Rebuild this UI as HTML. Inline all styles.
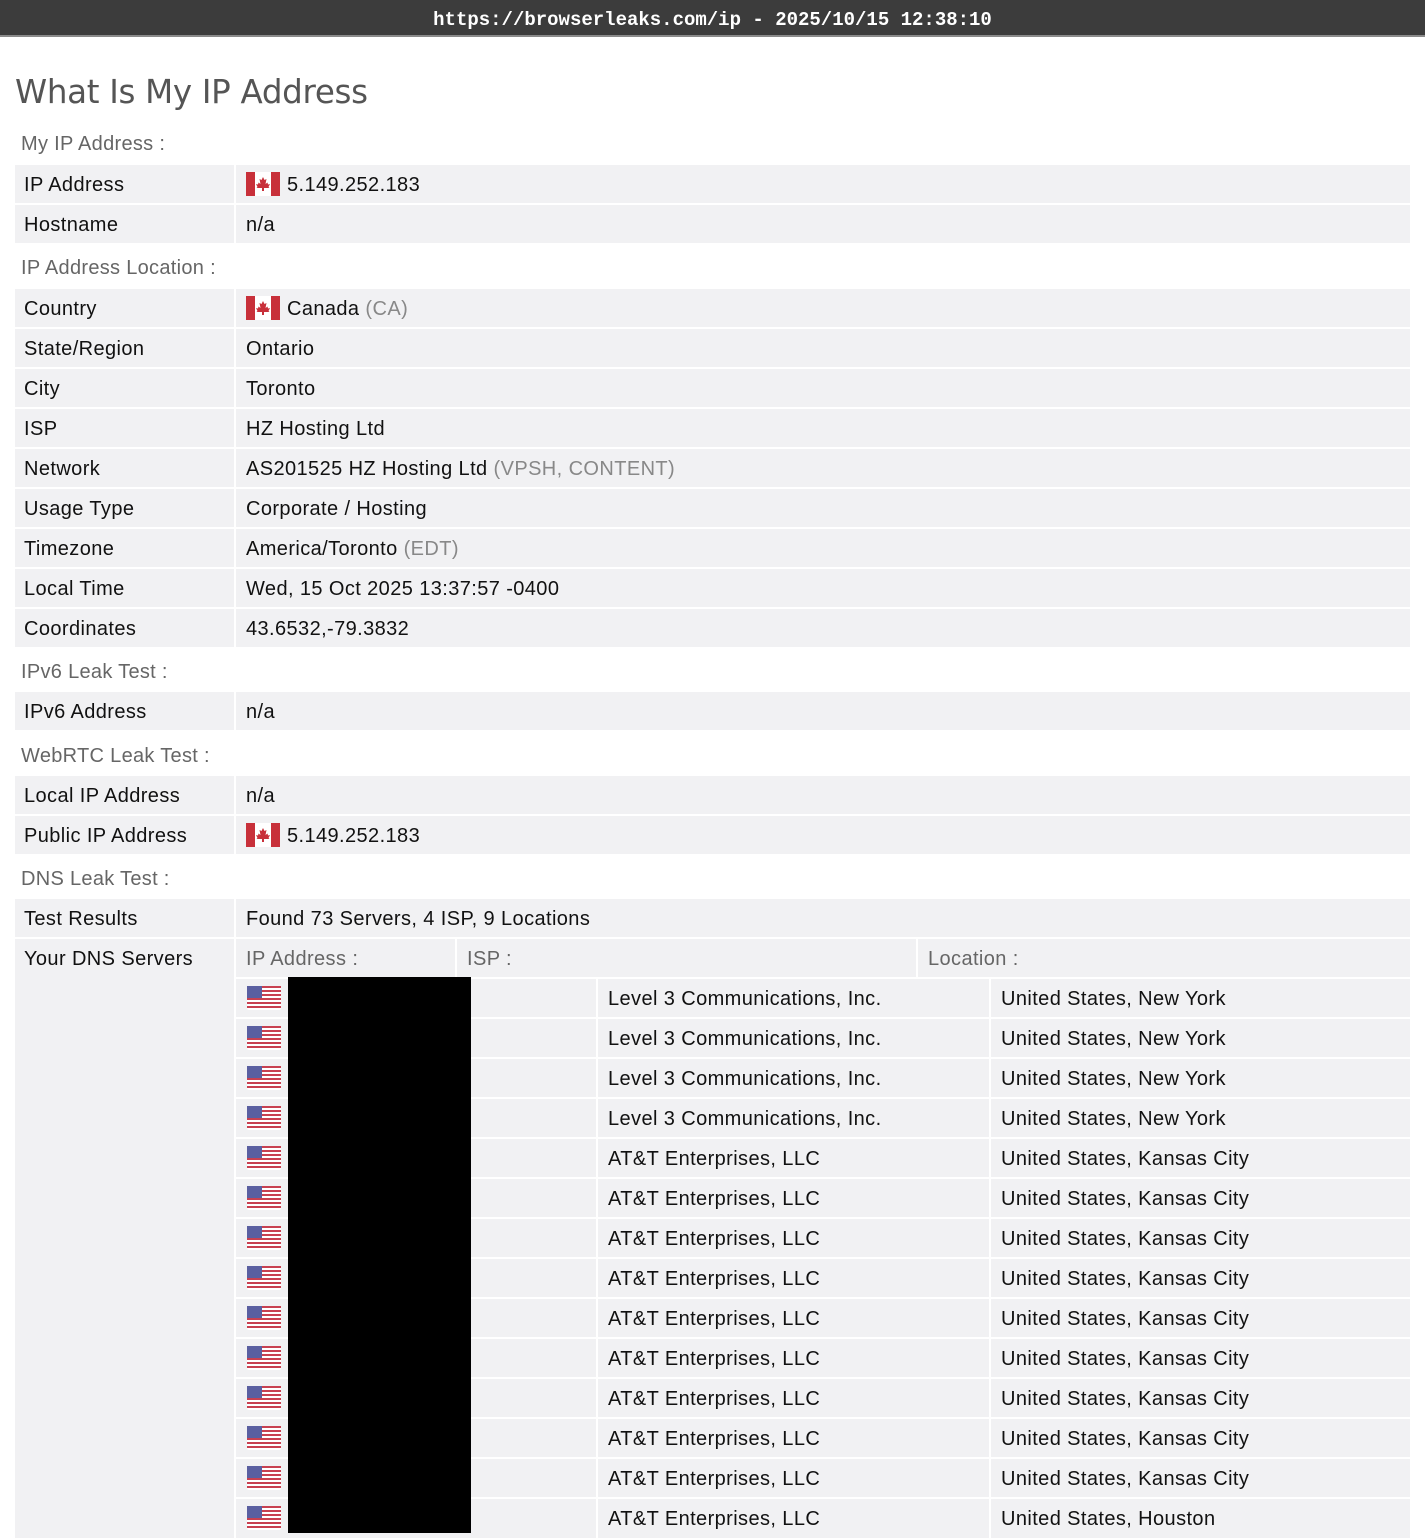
<!DOCTYPE html>
<html><head><meta charset="utf-8"><style>
*{margin:0;padding:0;box-sizing:border-box}
body{width:1425px;height:1538px;overflow:hidden;background:#fff;font-family:"Liberation Sans",Arial,sans-serif;position:relative;color:#111;letter-spacing:0.4px}
.top{position:absolute;left:0;top:0;width:1425px;height:37px;background:#3c3c3c;border-bottom:2px solid #8a8a8a;color:#fff;font-family:"Liberation Mono","DejaVu Sans Mono",monospace;font-weight:bold;font-size:19px;text-align:center;line-height:41px;letter-spacing:0}
h1{position:absolute;left:15px;top:73px;font-family:"DejaVu Sans","Liberation Sans",sans-serif;font-weight:normal;font-size:32.5px;color:#555;letter-spacing:-0.3px}
.sec{position:absolute;left:21px;font-size:20px;color:#666;line-height:26px;letter-spacing:0.3px}
.row{position:absolute;left:15px;width:1395px;height:38px;background:#f1f1f3;font-size:20px;line-height:40px}
.row .l{position:absolute;left:9px;top:0}
.row .v{position:absolute;left:231px;top:0}
.row:before{content:"";position:absolute;left:219px;top:0;width:2px;height:38px;background:#fff}
.g{color:#888}
.fl{display:inline-block;vertical-align:middle;margin-right:7px;position:relative;top:-2px}
.big{position:absolute;left:15px;top:939px;width:1395px;height:599px;background:#f1f1f3}
.big:before{content:"";position:absolute;left:219px;top:0;width:2px;height:599px;background:#fff}
.hd{position:absolute;top:939px;height:38px;font-size:20px;line-height:40px;color:#666;padding-left:10px}
.vl{position:absolute;width:2px;background:#fff}
.hl{position:absolute;left:236px;width:1174px;height:2px;background:#fff}
.d{position:absolute;font-size:20px;line-height:40px}
</style></head><body>
<div class="top">https://browserleaks.com/ip - 2025/10/15 12:38:10</div>
<h1>What Is My IP Address</h1>

<div class="sec" style="top:131px">My IP Address :</div>
<div class="row" style="top:165px"><span class="l">IP Address</span><span class="v"><svg class="fl" width="34" height="24" viewBox="0 0 34 24"><rect width="34" height="24" rx="2" fill="#fff"/><rect width="9" height="24" fill="#c8303a"/><rect x="25" width="9" height="24" fill="#c8303a"/><path d="M17 5l1.5 3 2-1-1 5 2-1.5.5 2 2-.5-1.5 3 1 1H18v3h-2v-3h-5.5l1-1-1.5-3 2 .5.5-2 2 1.5-1-5 2 1z" fill="#c8303a"/></svg>5.149.252.183</span></div>
<div class="row" style="top:205px"><span class="l">Hostname</span><span class="v">n/a</span></div>

<div class="sec" style="top:255px">IP Address Location :</div>
<div class="row" style="top:289px"><span class="l">Country</span><span class="v"><svg class="fl" width="34" height="24" viewBox="0 0 34 24"><rect width="34" height="24" rx="2" fill="#fff"/><rect width="9" height="24" fill="#c8303a"/><rect x="25" width="9" height="24" fill="#c8303a"/><path d="M17 5l1.5 3 2-1-1 5 2-1.5.5 2 2-.5-1.5 3 1 1H18v3h-2v-3h-5.5l1-1-1.5-3 2 .5.5-2 2 1.5-1-5 2 1z" fill="#c8303a"/></svg>Canada <span class="g">(CA)</span></span></div>
<div class="row" style="top:329px"><span class="l">State/Region</span><span class="v">Ontario</span></div>
<div class="row" style="top:369px"><span class="l">City</span><span class="v">Toronto</span></div>
<div class="row" style="top:409px"><span class="l">ISP</span><span class="v">HZ Hosting Ltd</span></div>
<div class="row" style="top:449px"><span class="l">Network</span><span class="v">AS201525 HZ Hosting Ltd <span class="g">(VPSH, CONTENT)</span></span></div>
<div class="row" style="top:489px"><span class="l">Usage Type</span><span class="v">Corporate / Hosting</span></div>
<div class="row" style="top:529px"><span class="l">Timezone</span><span class="v">America/Toronto <span class="g">(EDT)</span></span></div>
<div class="row" style="top:569px"><span class="l">Local Time</span><span class="v">Wed, 15 Oct 2025 13:37:57 -0400</span></div>
<div class="row" style="top:609px"><span class="l">Coordinates</span><span class="v">43.6532,-79.3832</span></div>

<div class="sec" style="top:659px">IPv6 Leak Test :</div>
<div class="row" style="top:692px"><span class="l">IPv6 Address</span><span class="v">n/a</span></div>

<div class="sec" style="top:743px">WebRTC Leak Test :</div>
<div class="row" style="top:776px"><span class="l">Local IP Address</span><span class="v">n/a</span></div>
<div class="row" style="top:816px"><span class="l">Public IP Address</span><span class="v"><svg class="fl" width="34" height="24" viewBox="0 0 34 24"><rect width="34" height="24" rx="2" fill="#fff"/><rect width="9" height="24" fill="#c8303a"/><rect x="25" width="9" height="24" fill="#c8303a"/><path d="M17 5l1.5 3 2-1-1 5 2-1.5.5 2 2-.5-1.5 3 1 1H18v3h-2v-3h-5.5l1-1-1.5-3 2 .5.5-2 2 1.5-1-5 2 1z" fill="#c8303a"/></svg>5.149.252.183</span></div>

<div class="sec" style="top:866px">DNS Leak Test :</div>
<div class="row" style="top:899px"><span class="l">Test Results</span><span class="v">Found 73 Servers, 4 ISP, 9 Locations</span></div>

<div class="big"></div>
<div class="d" style="left:24px;top:939px">Your DNS Servers</div>
<div class="hd" style="left:236px">IP Address :</div>
<div class="hd" style="left:457px">ISP :</div>
<div class="hd" style="left:918px">Location :</div>
<div class="vl" style="left:455px;top:939px;height:38px"></div>
<div class="vl" style="left:916px;top:939px;height:38px"></div>
<div class="vl" style="left:596px;top:977px;height:561px"></div>
<div class="vl" style="left:989px;top:977px;height:561px"></div>
<div class="hl" style="top:977px"></div><div class="hl" style="top:1017px"></div><div class="hl" style="top:1057px"></div><div class="hl" style="top:1097px"></div><div class="hl" style="top:1137px"></div><div class="hl" style="top:1177px"></div><div class="hl" style="top:1217px"></div><div class="hl" style="top:1257px"></div><div class="hl" style="top:1297px"></div><div class="hl" style="top:1337px"></div><div class="hl" style="top:1377px"></div><div class="hl" style="top:1417px"></div><div class="hl" style="top:1457px"></div><div class="hl" style="top:1497px"></div>

<svg style="position:absolute;left:0;top:0" width="300" height="1538">
<defs><g id="u"><rect width="34" height="24" fill="#fff" rx="2"/><g fill="#c84050"><rect y="0" width="34" height="2"/><rect y="4" width="34" height="2"/><rect y="8" width="34" height="2"/><rect y="12" width="34" height="2"/><rect y="16" width="34" height="2"/><rect y="20" width="34" height="2"/></g><rect width="15" height="12" fill="#5a5fa0"/></g></defs>
<use href="#u" x="247" y="986"/><use href="#u" x="247" y="1026"/><use href="#u" x="247" y="1066"/><use href="#u" x="247" y="1106"/><use href="#u" x="247" y="1146"/><use href="#u" x="247" y="1186"/><use href="#u" x="247" y="1226"/><use href="#u" x="247" y="1266"/><use href="#u" x="247" y="1306"/><use href="#u" x="247" y="1346"/><use href="#u" x="247" y="1386"/><use href="#u" x="247" y="1426"/><use href="#u" x="247" y="1466"/><use href="#u" x="247" y="1506"/>
</svg>
<div style="position:absolute;left:288px;top:977px;width:183px;height:556px;background:#000"></div>

<div class="d" style="left:608px;top:979px">Level 3 Communications, Inc.</div><div class="d" style="left:1001px;top:979px">United States, New York</div>
<div class="d" style="left:608px;top:1019px">Level 3 Communications, Inc.</div><div class="d" style="left:1001px;top:1019px">United States, New York</div>
<div class="d" style="left:608px;top:1059px">Level 3 Communications, Inc.</div><div class="d" style="left:1001px;top:1059px">United States, New York</div>
<div class="d" style="left:608px;top:1099px">Level 3 Communications, Inc.</div><div class="d" style="left:1001px;top:1099px">United States, New York</div>
<div class="d" style="left:608px;top:1139px">AT&amp;T Enterprises, LLC</div><div class="d" style="left:1001px;top:1139px">United States, Kansas City</div>
<div class="d" style="left:608px;top:1179px">AT&amp;T Enterprises, LLC</div><div class="d" style="left:1001px;top:1179px">United States, Kansas City</div>
<div class="d" style="left:608px;top:1219px">AT&amp;T Enterprises, LLC</div><div class="d" style="left:1001px;top:1219px">United States, Kansas City</div>
<div class="d" style="left:608px;top:1259px">AT&amp;T Enterprises, LLC</div><div class="d" style="left:1001px;top:1259px">United States, Kansas City</div>
<div class="d" style="left:608px;top:1299px">AT&amp;T Enterprises, LLC</div><div class="d" style="left:1001px;top:1299px">United States, Kansas City</div>
<div class="d" style="left:608px;top:1339px">AT&amp;T Enterprises, LLC</div><div class="d" style="left:1001px;top:1339px">United States, Kansas City</div>
<div class="d" style="left:608px;top:1379px">AT&amp;T Enterprises, LLC</div><div class="d" style="left:1001px;top:1379px">United States, Kansas City</div>
<div class="d" style="left:608px;top:1419px">AT&amp;T Enterprises, LLC</div><div class="d" style="left:1001px;top:1419px">United States, Kansas City</div>
<div class="d" style="left:608px;top:1459px">AT&amp;T Enterprises, LLC</div><div class="d" style="left:1001px;top:1459px">United States, Kansas City</div>
<div class="d" style="left:608px;top:1499px">AT&amp;T Enterprises, LLC</div><div class="d" style="left:1001px;top:1499px">United States, Houston</div>
</body></html>
